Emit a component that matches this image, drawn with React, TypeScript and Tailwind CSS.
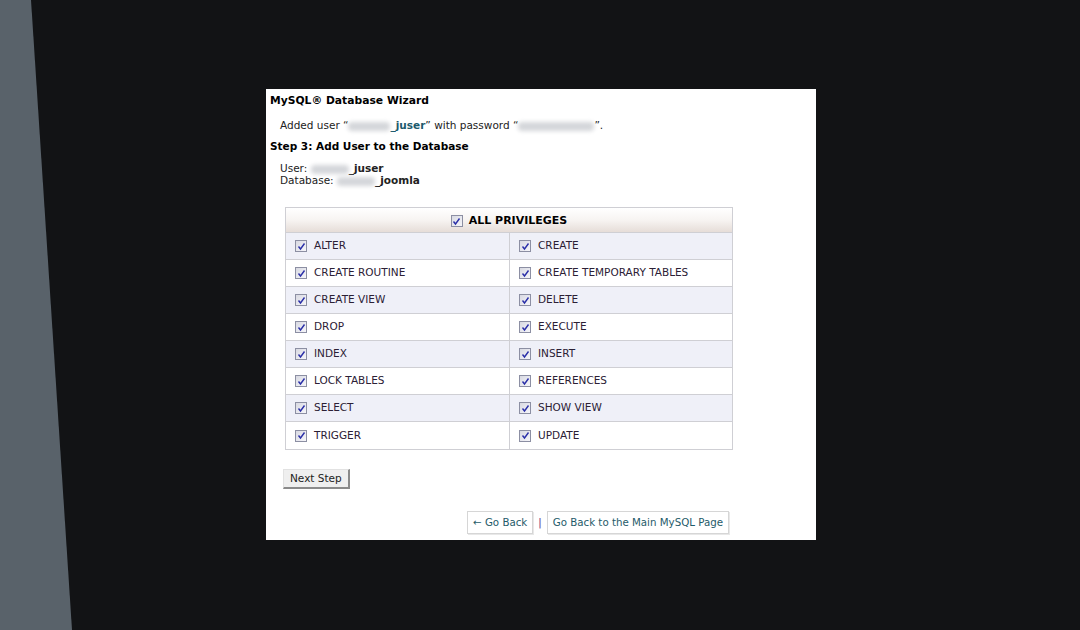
import React from 'react';

const privileges: [string, string][] = [
  ['ALTER', 'CREATE'],
  ['CREATE ROUTINE', 'CREATE TEMPORARY TABLES'],
  ['CREATE VIEW', 'DELETE'],
  ['DROP', 'EXECUTE'],
  ['INDEX', 'INSERT'],
  ['LOCK TABLES', 'REFERENCES'],
  ['SELECT', 'SHOW VIEW'],
  ['TRIGGER', 'UPDATE'],
];

// blurred-out account name
const Blur = ({ w }: { w: string }) => (
  <span className={`inline-block h-[9px] ${w} bg-[#d4d6da] blur-[2px] rounded-sm align-middle`} />
);

const Check = () => (
  <span className="inline-flex items-center justify-center w-[12px] h-[12px] border border-[#8c8fa3] bg-gradient-to-br from-[#d8d9e2] to-[#f6f6fa] shrink-0">
    <svg width="9" height="9" viewBox="0 0 9 9">
      <path d="M1.5 4.5 L3.5 7 L7.5 1.5" fill="none" stroke="#2a2fa8" strokeWidth="1.4" />
    </svg>
  </span>
);

const Cell = ({ label, last }: { label: string; last?: boolean }) => (
  <div className={`flex items-center gap-[7px] pl-[9px] h-full ${last ? '' : 'border-r border-[#cfcfd4]'}`}>
    <Check />
    <span className="text-[#2b2035] text-[10.5px]">{label}</span>
  </div>
);

const App: React.FC = () => {
  return (
    <div className="relative w-[1080px] h-[630px] bg-[#121315] overflow-hidden font-['DejaVu_Sans',Verdana,sans-serif]">
      {/* slanted gray edge on the left */}
      <div className="absolute inset-0 bg-[#59626a] [clip-path:polygon(0_0,31px_0,72px_100%,0_100%)]" />

      <div className="absolute left-[266px] top-[89px] w-[550px] h-[451px] bg-white text-black">
        <div className="pl-[4px] pt-[5px]">
          <h1 className="text-[10.75px] font-bold leading-[14px]">MySQL® Database Wizard</h1>
          <p className="mt-[10px] ml-[10px] text-[10.5px] leading-[14px] text-[#222]">
            Added user “<Blur w="w-[42px]" />
            <span className="font-bold text-[#1d5a6c]">_juser</span>” with password “<Blur w="w-[76px]" />”.
          </p>
          <h2 className="mt-[7px] text-[10.5px] font-bold leading-[14px]">Step 3: Add User to the Database</h2>
          <div className="mt-[9px] ml-[10px] text-[10.5px] leading-[12px] text-[#222]">
            <div>
              User: <Blur w="w-[38px]" />
              <span className="font-bold">_juser</span>
            </div>
            <div>
              Database: <Blur w="w-[38px]" />
              <span className="font-bold">_joomla</span>
            </div>
          </div>
        </div>

        <div className="ml-[19px] mt-[21px] w-[448px] border border-[#cfcfd4]">
          <div className="h-[25px] flex items-center justify-center gap-[6px] pt-[2px] bg-gradient-to-b from-white via-[#f7f4f2] to-[#e6ddd8] border-b border-[#cfcfd4]">
            <Check />
            <span className="text-[11px] font-bold text-black">ALL PRIVILEGES</span>
          </div>
          {privileges.map(([a, b], i) => (
            <div
              key={a}
              className={`grid grid-cols-[224px_1fr] h-[27px] ${i % 2 === 0 ? 'bg-[#eff0f8]' : 'bg-white'} ${
                i < privileges.length - 1 ? 'border-b border-[#cfcfd4]' : ''
              }`}
            >
              <Cell label={a} />
              <Cell label={b} last />
            </div>
          ))}
        </div>

        <button className="ml-[17px] mt-[19px] h-[20px] px-[6px] text-[10.5px] text-[#222] bg-[#efefef] border border-[#e2e2e2] border-r-[#8a8a8a] border-b-[#8a8a8a] border-r-2 border-b-2">
          Next Step
        </button>

        <div className="flex justify-end items-center gap-[5px] pr-[87px] mt-[22px] text-[10.25px] text-[#1f5b6a]">
          <span className="h-[23px] px-[5px] flex items-center border border-[#d6d6d6] shadow-[1px_1px_0_#e8e8e8]">← Go Back</span>
          <span className="text-[#5b2a7a]">|</span>
          <span className="h-[23px] px-[5px] flex items-center border border-[#d6d6d6] shadow-[1px_1px_0_#e8e8e8]">
            Go Back to the Main MySQL Page
          </span>
        </div>
      </div>
    </div>
  );
};

export default App;
